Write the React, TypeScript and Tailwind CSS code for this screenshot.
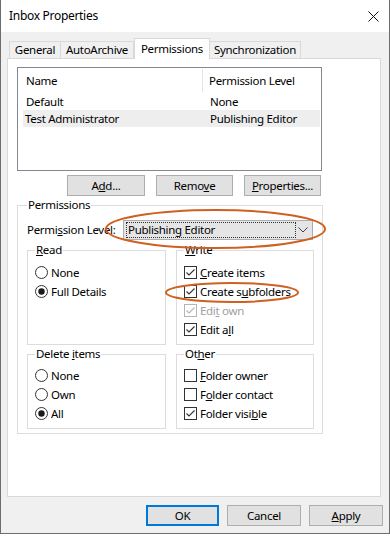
import React from "react";

const font = { fontFamily: '"Segoe UI", "Noto Sans", sans-serif' };

function Check({ disabled }: { disabled?: boolean }) {
  const c = disabled ? "#b5b5b5" : "#333333";
  return (
    <svg width="13" height="13" viewBox="0 0 13 13" className="shrink-0">
      <rect x="0.5" y="0.5" width="12" height="12" fill="#fff" stroke={c} />
      <path d="M2.5 6.5 L5 9 L10.5 3.5" fill="none" stroke={c} strokeWidth="1.1" />
    </svg>
  );
}

function Box() {
  return (
    <svg width="13" height="13" viewBox="0 0 13 13" className="shrink-0">
      <rect x="0.5" y="0.5" width="12" height="12" fill="#fff" stroke="#333333" />
    </svg>
  );
}

function Radio({ on }: { on?: boolean }) {
  return (
    <svg width="13" height="13" viewBox="0 0 13 13" className="shrink-0">
      <circle cx="6.5" cy="6.5" r="6" fill="#fff" stroke="#333333" />
      {on && <circle cx="6.5" cy="6.5" r="3.2" fill="#1a1a1a" />}
    </svg>
  );
}

function Option({ icon, children, disabled }: { icon: React.ReactNode; children: React.ReactNode; disabled?: boolean }) {
  return (
    <div className={`flex h-[19px] items-center gap-[3px] ${disabled ? "text-[#a0a0a0]" : "text-black"}`}>
      {icon}
      <span>{children}</span>
    </div>
  );
}

function Group({ label, children, className }: { label: React.ReactNode; children: React.ReactNode; className?: string }) {
  return (
    <fieldset className={`border border-[#dcdcdc] px-[7px] ${className ?? ""}`}>
      <legend className="px-[1px] leading-[16px]">{label}</legend>
      {children}
    </fieldset>
  );
}

function Btn({ children, w, primary }: { children: React.ReactNode; w: string; primary?: boolean }) {
  return (
    <button
      className={`${w} h-[21px] bg-[#e1e1e1] leading-none text-black ${
        primary ? "border-2 border-[#0078d7]" : "border border-[#adadad]"
      }`}
    >
      {children}
    </button>
  );
}

export default function App() {
  return (
    <div className="relative h-[537px] w-[390px] bg-white text-[11.5px] tracking-[-0.3px] text-black" style={font}>
      <div className="flex h-[534px] flex-col border-x border-b border-[#6d6d6d] bg-[#f0f0f0]">
        {/* title bar */}
        <div className="flex h-[32px] items-center justify-between bg-white pl-[8px] pr-[10px]">
          <span className="text-[12px]">Inbox Properties</span>
          <svg width="11" height="11" viewBox="0 0 11 11">
            <path d="M0.5 0.5 L10.5 10.5 M10.5 0.5 L0.5 10.5" stroke="#111" strokeWidth="1" />
          </svg>
        </div>

        {/* tabs */}
        <div className="flex items-end pl-[8px] pt-[6px]">
          <div className="flex h-[17px] w-[52px] items-center justify-center border-x border-t border-[#d9d9d9]">General</div>
          <div className="flex h-[17px] w-[73px] items-center justify-center border-r border-t border-[#d9d9d9]">AutoArchive</div>
          <div className="relative z-10 -mb-px flex h-[21px] w-[76px] items-start justify-center border-x border-t border-[#d9d9d9] bg-white pt-[1px]">
            Permissions
          </div>
          <div className="flex h-[17px] w-[91px] items-center justify-center border-r border-t border-[#d9d9d9]">Synchronization</div>
        </div>

        {/* panel */}
        <div className="ml-[6px] flex h-[439px] w-[374px] flex-col border border-[#d9d9d9] bg-white pl-[9px] pt-[8px]">
          {/* list */}
          <div className="h-[104px] w-[305px] border border-[#828790] bg-white">
            <div className="flex h-[25px] items-center">
              <div className="flex h-[23px] w-[185px] items-center border-r border-[#e5e5e5] pl-[8px]">Name</div>
              <div className="pl-[6px]">Permission Level</div>
            </div>
            <div className="ml-[5px] mr-px flex h-[17px] items-center">
              <div className="w-[182px] pl-[3px]">Default</div>
              <div className="pl-[5px]">None</div>
            </div>
            <div className="ml-[5px] mr-px flex h-[17px] items-center bg-[#eeeeee]">
              <div className="w-[182px] pl-[2px]">Test Administrator</div>
              <div className="pl-[5px]">Publishing Editor</div>
            </div>
          </div>

          <div className="ml-[50px] mt-[4px] flex gap-[11px]">
            <Btn w="w-[78px]">
              A<u>d</u>d...
            </Btn>
            <Btn w="w-[77px]">
              Remo<u>v</u>e
            </Btn>
            <Btn w="w-[77px]">
              <u>P</u>roperties...
            </Btn>
          </div>

          {/* permissions group */}
          <Group label="Permissions" className="mt-[1px] w-[305px] pb-[4px] pl-[9px] pr-[8px]">
            <div className="mt-[7px] flex items-center">
              <span className="w-[96px] whitespace-nowrap">
                Permi<u>s</u>sion Level:
              </span>
              <div className="flex h-[20px] w-[190px] items-center border border-[#adadad] bg-[#e5e5e5] pl-[2px] pr-[4px]">
                <div className="flex h-[16px] w-[170px] items-center border border-dotted border-[#333] pl-[1px]">Publishing Editor</div>
                <svg width="10" height="6" viewBox="0 0 10 6" className="ml-auto">
                  <path d="M0.5 0.5 L5 5 L9.5 0.5" fill="none" stroke="#444" />
                </svg>
              </div>
            </div>

            <div className="mt-[2px] grid grid-cols-[139px_138px] gap-x-[10px] gap-y-[1px]">
              <Group label={<><u>R</u>ead</>} className="pb-[5px] pt-[5px]">
                <Option icon={<Radio />}>None</Option>
                <Option icon={<Radio on />}>Full Details</Option>
              </Group>
              <Group label={<><u>W</u>rite</>} className="pb-[5px] pt-[5px]">
                <Option icon={<Check />}>
                  <u>C</u>reate items
                </Option>
                <Option icon={<Check />}>
                  Create s<u>u</u>bfolders
                </Option>
                <Option icon={<Check disabled />} disabled>
                  Edi<u>t</u> own
                </Option>
                <Option icon={<Check />}>
                  Edit a<u>l</u>l
                </Option>
              </Group>
              <Group label={<>Delete <u>i</u>tems</>} className="pb-[5px] pt-[4px]">
                <Option icon={<Radio />}>None</Option>
                <Option icon={<Radio />}>Own</Option>
                <Option icon={<Radio on />}>All</Option>
              </Group>
              <Group label={<>Ot<u>h</u>er</>} className="pb-[5px] pt-[4px]">
                <Option icon={<Box />}>
                  <u>F</u>older owner
                </Option>
                <Option icon={<Box />}>
                  F<u>o</u>lder contact
                </Option>
                <Option icon={<Check />}>
                  Folder visi<u>b</u>le
                </Option>
              </Group>
            </div>
          </Group>
        </div>

        {/* bottom buttons */}
        <div className="mt-[8px] flex justify-end gap-[8px] pr-[6px]">
          <Btn w="w-[73px]" primary>
            OK
          </Btn>
          <Btn w="w-[74px]">Cancel</Btn>
          <Btn w="w-[74px]">
            <u>A</u>pply
          </Btn>
        </div>
      </div>

      {/* annotation ellipses */}
      <svg className="pointer-events-none absolute inset-0" width="390" height="537">
        <ellipse cx="215.5" cy="229" rx="109.5" ry="19" fill="none" stroke="#d0601f" strokeWidth="2" />
        <ellipse cx="232" cy="292.5" rx="66" ry="9.5" fill="none" stroke="#d0601f" strokeWidth="2" />
      </svg>
    </div>
  );
}
